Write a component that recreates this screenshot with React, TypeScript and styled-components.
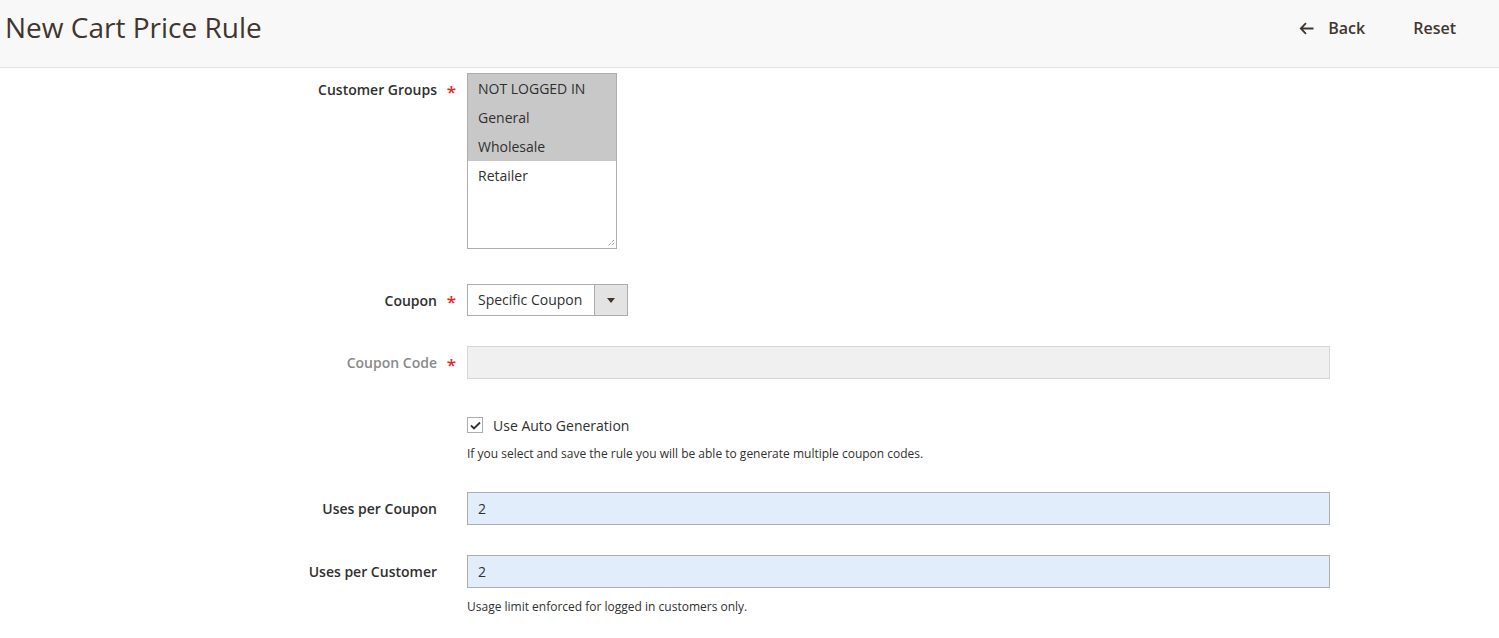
import React from "react";
import styled, { createGlobalStyle } from "styled-components";

const Global = createGlobalStyle`
  html, body { margin: 0; padding: 0; background: #ffffff; }
  body { font-family: "Open Sans", "Liberation Sans", sans-serif; color: #303030; }
  * { box-sizing: border-box; }
`;

const Header = styled.header`
  height: 68px;
  background: #f8f8f8;
  border-bottom: 1px solid #e3e3e3;
  display: flex;
  align-items: flex-start;
  justify-content: space-between;
  padding: 7px 43px 0 5px;
`;

const Title = styled.h1`
  margin: 0;
  font-size: 28px;
  font-weight: 400;
  line-height: 40px;
  color: #41362f;
`;

const Actions = styled.div`
  display: flex;
  align-items: center;
  gap: 48px;
  padding-top: 11px;
`;

const ActionButton = styled.button`
  border: 0;
  background: none;
  padding: 0;
  display: flex;
  align-items: center;
  gap: 14px;
  font-family: "Open Sans", "Liberation Sans", sans-serif;
  font-size: 16px;
  font-weight: 600;
  color: #41362f;
  line-height: 20px;
  cursor: pointer;
`;

const Form = styled.div`
  padding-top: 5px;
  width: 1330px;
`;

const Row = styled.div<{ $top: number }>`
  display: grid;
  grid-template-columns: 467px 863px;
  margin-top: ${(p) => p.$top}px;
`;

const LabelCell = styled.div<{ $h: number }>`
  height: ${(p) => p.$h}px;
  display: flex;
  align-items: center;
  justify-content: flex-end;
  padding-right: 30px;
  position: relative;
`;

const Label = styled.label<{ $muted?: boolean }>`
  font-size: 14px;
  font-weight: 600;
  color: ${(p) => (p.$muted ? "#8a8a8a" : "#303030")};
`;

const Star = styled.span`
  position: absolute;
  right: 11px;
  top: 50%;
  transform: translateY(-42%);
  color: #e22626;
  font-size: 17px;
  font-weight: 600;
`;

const Control = styled.div`
  display: flex;
  flex-direction: column;
  align-items: flex-start;
`;

const MultiSelect = styled.div`
  width: 150px;
  height: 176px;
  border: 1px solid #adadad;
  background: #fff;
  position: relative;
  overflow: hidden;
`;

const Option = styled.div<{ $selected?: boolean }>`
  height: 29px;
  line-height: 29px;
  padding-left: 10px;
  font-size: 14px;
  color: #303030;
  background: ${(p) => (p.$selected ? "#c8c8c8" : "transparent")};
`;

const Grip = styled.svg`
  position: absolute;
  right: 1px;
  bottom: 1px;
`;

const Select = styled.div`
  width: 161px;
  height: 32px;
  border: 1px solid #adadad;
  display: flex;
  background: #fff;
`;

const SelectText = styled.div`
  flex: 1;
  padding-left: 10px;
  font-size: 14px;
  line-height: 30px;
  color: #303030;
`;

const SelectArrow = styled.div`
  width: 33px;
  border-left: 1px solid #adadad;
  background: #e3e3e3;
  display: flex;
  align-items: center;
  justify-content: center;
`;

const TextInput = styled.div<{ $disabled?: boolean }>`
  width: 863px;
  height: 33px;
  border: 1px solid ${(p) => (p.$disabled ? "#d6d6d6" : "#adadad")};
  background: ${(p) => (p.$disabled ? "#f0f0f0" : "#e2edfb")};
  padding-left: 10px;
  font-size: 14px;
  line-height: 31px;
  color: #303030;
`;

const CheckRow = styled.div`
  display: flex;
  align-items: center;
  gap: 10px;
  height: 18px;
`;

const CheckBox = styled.span`
  width: 16px;
  height: 16px;
  border: 1px solid #adadad;
  background: #fff;
  display: flex;
  align-items: center;
  justify-content: center;
`;

const CheckText = styled.span`
  font-size: 14px;
  color: #303030;
`;

const Note = styled.div<{ $top: number }>`
  margin-top: ${(p) => p.$top}px;
  font-size: 12px;
  line-height: 16px;
  color: #303030;
`;

export default function App() {
  return (
    <>
      <Global />
      <Header>
        <Title>New Cart Price Rule</Title>
        <Actions>
          <ActionButton>
            <svg width="15" height="13" viewBox="0 0 15 13">
              <path d="M14.5 6.5H1.8M7 1.2L1.8 6.5 7 11.8" fill="none" stroke="#41362f" strokeWidth="1.8" />
            </svg>
            Back
          </ActionButton>
          <ActionButton>Reset</ActionButton>
        </Actions>
      </Header>
      <Form>
        <Row $top={0}>
          <LabelCell $h={33}>
            <Label>Customer Groups</Label>
            <Star>*</Star>
          </LabelCell>
          <Control>
            <MultiSelect>
              <Option $selected>NOT LOGGED IN</Option>
              <Option $selected>General</Option>
              <Option $selected>Wholesale</Option>
              <Option>Retailer</Option>
              <Grip width="9" height="9" viewBox="0 0 9 9">
                <path d="M8 2L2 8M8 5L5 8" stroke="#777" strokeWidth="1" strokeDasharray="1 1" />
              </Grip>
            </MultiSelect>
          </Control>
        </Row>
        <Row $top={35}>
          <LabelCell $h={32}>
            <Label>Coupon</Label>
            <Star>*</Star>
          </LabelCell>
          <Control>
            <Select>
              <SelectText>Specific Coupon</SelectText>
              <SelectArrow>
                <svg width="8" height="5" viewBox="0 0 8 5">
                  <path d="M0 0h8L4 5z" fill="#41362f" />
                </svg>
              </SelectArrow>
            </Select>
          </Control>
        </Row>
        <Row $top={30}>
          <LabelCell $h={33}>
            <Label $muted>Coupon Code</Label>
            <Star>*</Star>
          </LabelCell>
          <Control>
            <TextInput $disabled />
          </Control>
        </Row>
        <Row $top={37}>
          <div />
          <Control>
            <CheckRow>
              <CheckBox>
                <svg width="11" height="9" viewBox="0 0 11 9">
                  <path d="M1 4.5l3 3L10 1.5" fill="none" stroke="#303030" strokeWidth="1.8" />
                </svg>
              </CheckBox>
              <CheckText>Use Auto Generation</CheckText>
            </CheckRow>
            <Note $top={12}>If you select and save the rule you will be able to generate multiple coupon codes.</Note>
          </Control>
        </Row>
        <Row $top={30}>
          <LabelCell $h={33}>
            <Label>Uses per Coupon</Label>
          </LabelCell>
          <Control>
            <TextInput>2</TextInput>
          </Control>
        </Row>
        <Row $top={30}>
          <LabelCell $h={33}>
            <Label>Uses per Customer</Label>
          </LabelCell>
          <Control>
            <TextInput>2</TextInput>
            <Note $top={11}>Usage limit enforced for logged in customers only.</Note>
          </Control>
        </Row>
      </Form>
    </>
  );
}
